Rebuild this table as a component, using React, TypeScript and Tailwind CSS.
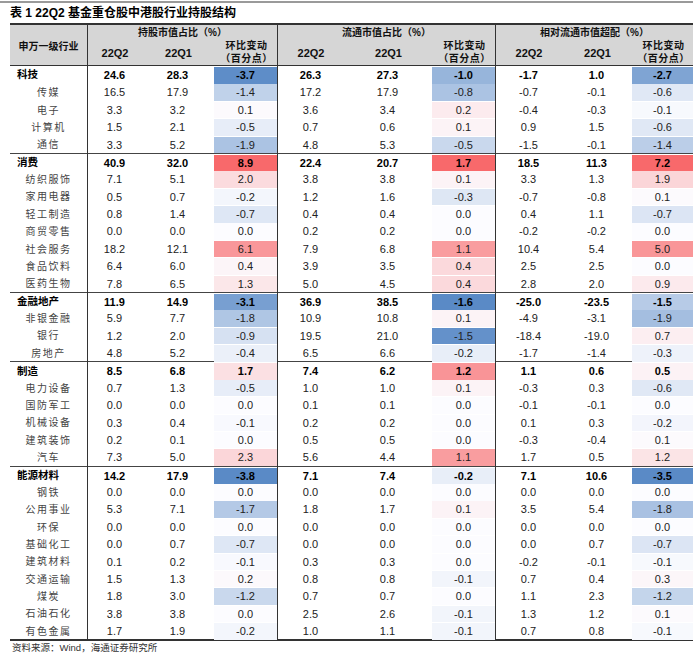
import React from 'react';

type Row = { name: string; bold?: boolean; v: number[] };

const groups: Row[][] = [
  [
    { name: '科技', bold: true, v: [24.6, 28.3, -3.7, 26.3, 27.3, -1.0, -1.7, 1.0, -2.7] },
    { name: '传媒', v: [16.5, 17.9, -1.4, 17.2, 17.9, -0.8, -0.7, -0.1, -0.6] },
    { name: '电子', v: [3.3, 3.2, 0.1, 3.6, 3.4, 0.2, -0.4, -0.3, -0.1] },
    { name: '计算机', v: [1.5, 2.1, -0.5, 0.7, 0.6, 0.1, 0.9, 1.5, -0.6] },
    { name: '通信', v: [3.3, 5.2, -1.9, 4.8, 5.3, -0.5, -1.5, -0.1, -1.4] },
  ],
  [
    { name: '消费', bold: true, v: [40.9, 32.0, 8.9, 22.4, 20.7, 1.7, 18.5, 11.3, 7.2] },
    { name: '纺织服饰', v: [7.1, 5.1, 2.0, 3.8, 3.8, 0.1, 3.3, 1.3, 1.9] },
    { name: '家用电器', v: [0.5, 0.7, -0.2, 1.2, 1.6, -0.3, -0.7, -0.8, 0.1] },
    { name: '轻工制造', v: [0.8, 1.4, -0.7, 0.4, 0.4, 0.0, 0.4, 1.1, -0.7] },
    { name: '商贸零售', v: [0.0, 0.0, 0.0, 0.2, 0.2, 0.0, -0.2, -0.2, 0.0] },
    { name: '社会服务', v: [18.2, 12.1, 6.1, 7.9, 6.8, 1.1, 10.4, 5.4, 5.0] },
    { name: '食品饮料', v: [6.4, 6.0, 0.4, 3.9, 3.5, 0.4, 2.5, 2.5, 0.0] },
    { name: '医药生物', v: [7.8, 6.5, 1.3, 5.0, 4.5, 0.4, 2.8, 2.0, 0.9] },
  ],
  [
    { name: '金融地产', bold: true, v: [11.9, 14.9, -3.1, 36.9, 38.5, -1.6, -25.0, -23.5, -1.5] },
    { name: '非银金融', v: [5.9, 7.7, -1.8, 10.9, 10.8, 0.1, -4.9, -3.1, -1.9] },
    { name: '银行', v: [1.2, 2.0, -0.9, 19.5, 21.0, -1.5, -18.4, -19.0, 0.7] },
    { name: '房地产', v: [4.8, 5.2, -0.4, 6.5, 6.6, -0.2, -1.7, -1.4, -0.3] },
  ],
  [
    { name: '制造', bold: true, v: [8.5, 6.8, 1.7, 7.4, 6.2, 1.2, 1.1, 0.6, 0.5] },
    { name: '电力设备', v: [0.7, 1.3, -0.5, 1.0, 1.0, 0.1, -0.3, 0.3, -0.6] },
    { name: '国防军工', v: [0.0, 0.0, 0.0, 0.1, 0.1, 0.0, -0.1, -0.1, 0.0] },
    { name: '机械设备', v: [0.3, 0.4, -0.1, 0.2, 0.2, 0.0, 0.1, 0.3, -0.2] },
    { name: '建筑装饰', v: [0.2, 0.1, 0.0, 0.5, 0.5, 0.0, -0.3, -0.4, 0.1] },
    { name: '汽车', v: [7.3, 5.0, 2.3, 5.6, 4.4, 1.1, 1.7, 0.5, 1.2] },
  ],
  [
    { name: '能源材料', bold: true, v: [14.2, 17.9, -3.8, 7.1, 7.4, -0.2, 7.1, 10.6, -3.5] },
    { name: '钢铁', v: [0.0, 0.0, 0.0, 0.0, 0.0, 0.0, 0.0, 0.0, 0.0] },
    { name: '公用事业', v: [5.3, 7.1, -1.7, 1.8, 1.7, 0.1, 3.5, 5.4, -1.8] },
    { name: '环保', v: [0.0, 0.0, 0.0, 0.0, 0.0, 0.0, 0.0, 0.0, 0.0] },
    { name: '基础化工', v: [0.0, 0.7, -0.7, 0.0, 0.0, 0.0, 0.0, 0.7, -0.7] },
    { name: '建筑材料', v: [0.1, 0.2, -0.1, 0.3, 0.3, 0.0, -0.2, -0.1, -0.1] },
    { name: '交通运输', v: [1.5, 1.3, 0.2, 0.8, 0.8, -0.1, 0.7, 0.4, 0.3] },
    { name: '煤炭', v: [1.8, 3.0, -1.2, 0.7, 0.7, 0.0, 1.1, 2.3, -1.2] },
    { name: '石油石化', v: [3.8, 3.8, 0.0, 2.5, 2.6, -0.1, 1.3, 1.2, 0.1] },
    { name: '有色金属', v: [1.7, 1.9, -0.2, 1.0, 1.1, -0.1, 0.7, 0.8, -0.1] },
  ],
];

const allRows = groups.flat();
const heatCols = [2, 5, 8];
const ranges: Record<number, [number, number]> = {};
heatCols.forEach((c) => {
  const vals = allRows.map((r) => r.v[c]);
  ranges[c] = [Math.min(...vals), Math.max(...vals)];
});

// excel-ish 3 colour scale: blue -> white -> red
const BLUE = [90, 138, 198];
const MID = [252, 252, 255];
const RED = [248, 105, 107];

function heat(v: number, min: number, max: number) {
  const t = v < 0 ? v / min : v > 0 ? v / max : 0;
  const end = v < 0 ? BLUE : RED;
  const c = MID.map((m, i) => Math.round(m + (end[i] - m) * t));
  return `rgb(${c.join(',')})`;
}

const FONT = "font-['Liberation_Sans','Noto_Sans_CJK_SC',sans-serif]";
const COLS = 'grid grid-cols-[77px_54px_73px_63px_66px_89px_63px_66px_71px_61px]';

const groupHeads = [
  { title: '持股市值占比（%）', w: 'w-[190px]', cols: 'grid-cols-[54px_73px_63px]' },
  { title: '流通市值占比（%）', w: 'w-[218px]', cols: 'grid-cols-[66px_89px_63px]' },
  { title: '相对流通市值超配（%）', w: 'w-[198px]', cols: 'grid-cols-[66px_71px_61px]' },
];

function Header() {
  return (
    <div className="flex h-[43px] border-t-2 border-b border-[#333] bg-[#d6d6d6] text-[#111] font-bold">
      <div className="w-[77px] flex items-center justify-center pt-[2px] text-[10px]">
        申万一级行业
      </div>
      {groupHeads.map((g) => (
        <div key={g.title} className={`${g.w} border-l border-[#333] flex flex-col`}>
          <div className="h-[14px] flex items-center justify-center text-[10px] pt-[1px]">
            {g.title}
          </div>
          <div className={`grid ${g.cols} flex-1`}>
            <div className="flex items-center justify-center text-[11px] pt-[2px]">22Q2</div>
            <div className="flex items-center justify-center text-[11px] pt-[2px]">22Q1</div>
            <div className="flex flex-col items-center justify-center text-[10px] leading-[13px] tracking-[0.5px]">
              <span>环比变动</span>
              <span>（百分点）</span>
            </div>
          </div>
        </div>
      ))}
    </div>
  );
}

function DataRow({ row, first }: { row: Row; first: boolean }) {
  return (
    <div className={`${COLS} h-[17.375px] ${first ? 'border-t-[1.5px] border-[#444]' : ''}`}>
      {row.bold ? (
        <div className="flex items-center pl-[7px] text-[10.5px] font-bold text-black">{row.name}</div>
      ) : (
        <div className="flex items-center justify-center text-[10px] tracking-[1.5px] text-[#444]">{row.name}</div>
      )}
      {row.v.map((v, i) => {
        const line = i === 0 || i === 3 || i === 6 ? 'border-l border-[#333]' : '';
        const text = `${row.bold ? 'font-bold text-black' : 'text-[#222]'} text-[11px]`;
        if (heatCols.includes(i)) {
          const [mn, mx] = ranges[i];
          return (
            <div key={i} className={`py-px ${text}`}>
              <div
                className="h-full flex items-center justify-center"
                style={{ backgroundColor: heat(v, mn, mx) }}
              >
                {v.toFixed(1)}
              </div>
            </div>
          );
        }
        return (
          <div key={i} className={`${line} flex items-center justify-center ${text}`}>
            {v.toFixed(1)}
          </div>
        );
      })}
    </div>
  );
}

export default function App() {
  return (
    <div className={`w-[700px] h-[657px] bg-white pt-px ${FONT}`}>
      <div className="w-[693px] h-[2px] bg-[#9a9a9a]" />
      <div className="h-[20px] flex items-center pl-[10px] text-[12px] font-bold text-black">
        表 1 22Q2 基金重仓股中港股行业持股结构
      </div>
      <div className="ml-[10px] w-[683px]">
        <Header />
        <div className="border-b-2 border-[#333]">
          {groups.map((g, gi) =>
            g.map((row, ri) => <DataRow key={row.name} row={row} first={ri === 0 && gi > 0} />)
          )}
        </div>
      </div>
      <div className="mt-px pl-[12px] h-[12px] leading-[12px] text-[9.5px] text-[#333]">
        资料来源：Wind，海通证券研究所
      </div>
    </div>
  );
}
